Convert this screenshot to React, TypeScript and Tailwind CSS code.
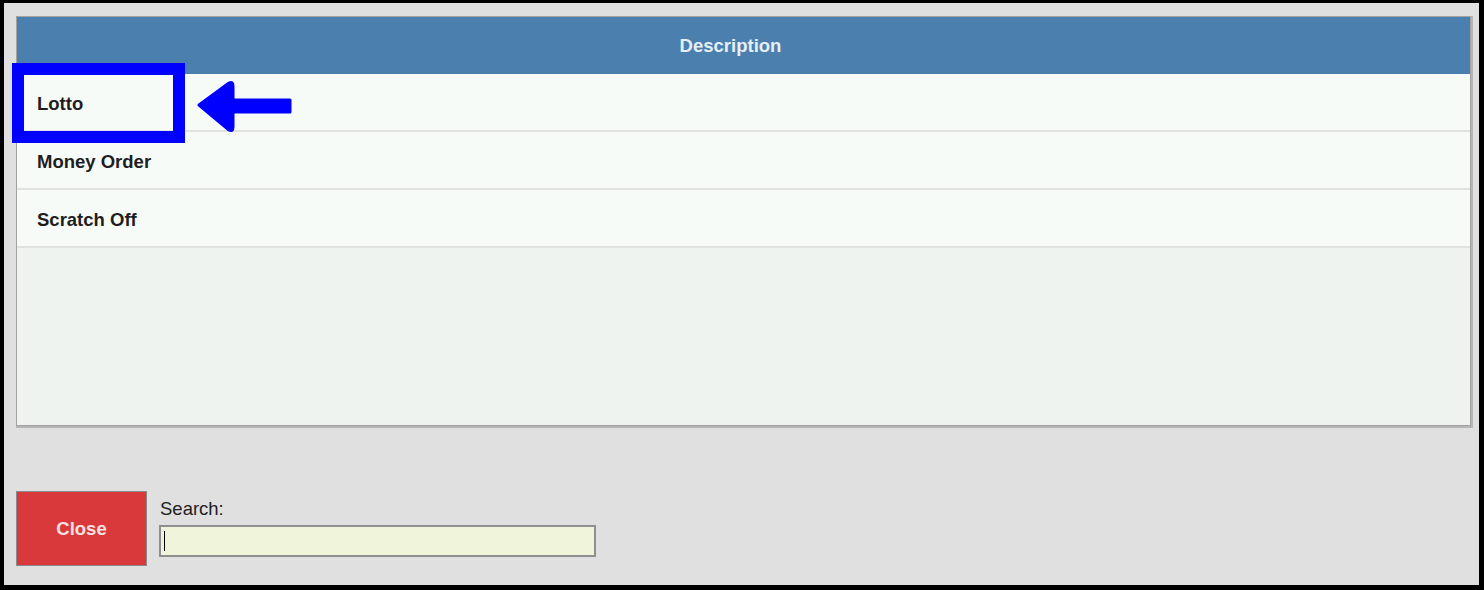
import React from 'react'

const rows = ['Lotto', 'Money Order', 'Scratch Off']

export default function App() {
  return (
    <div className="relative w-[1484px] h-[590px] bg-black pl-[4px] pt-[3px] pr-[5px] pb-[5px] font-['Liberation_Sans',Arial,sans-serif]">
      <div className="flex flex-col w-full h-full bg-[#e0e0e0] pl-[12px] pt-[13px] pr-[8px]">
        {/* Table */}
        <div className="flex flex-col h-[410px] border border-[#a3a3a3] shadow-[1px_1px_0_1px_#b5b5b5] bg-[#eff3ef]">
          <div className="h-[57px] bg-[#4a7fae] flex items-center justify-center pr-[26px] text-[18.5px] font-bold text-[#e6eef6]">
            Description
          </div>
          {rows.map((r) => (
            <div
              key={r}
              className="h-[58px] flex items-center pl-[20px] pt-[3px] bg-[#f7fbf8] border-b-2 border-[#dfe2df] text-[18.5px] font-bold text-[#1e1e1e]"
            >
              {r}
            </div>
          ))}
        </div>

        {/* Footer */}
        <div className="flex items-end gap-[12px] mt-[65px]">
          <button className="w-[131px] h-[75px] bg-[#d9393a] border border-[#8a8a8a] text-[18.5px] font-bold text-[#f6e0e0]">
            Close
          </button>
          <div className="flex flex-col mb-[9px]">
            <label className="text-[18.5px] text-[#222] leading-none mb-[7px] pl-[1px]">Search:</label>
            <div className="relative w-[437px] h-[32px] bg-[#eff4da] border-2 border-[#8f8f8f]">
              <div className="absolute left-[3px] top-[4px] w-[1px] h-[20px] bg-black" />
            </div>
          </div>
        </div>
      </div>

      {/* Annotation box */}
      <div className="absolute left-[12px] top-[63px] w-[173px] h-[80px] border-[12px] border-[#0000ff]" />

      {/* Annotation arrow */}
      <svg className="absolute left-[195px] top-[80px]" width="100" height="54" viewBox="0 0 100 54">
        <path d="M4 25 L34 3 Q38 1 38 6 L38 20 L95 20 L95 32 L38 32 L38 47 Q38 52 34 50 Z" fill="#0000ff" strokeLinejoin="round" stroke="#0000ff" strokeWidth="3" />
      </svg>
    </div>
  )
}
